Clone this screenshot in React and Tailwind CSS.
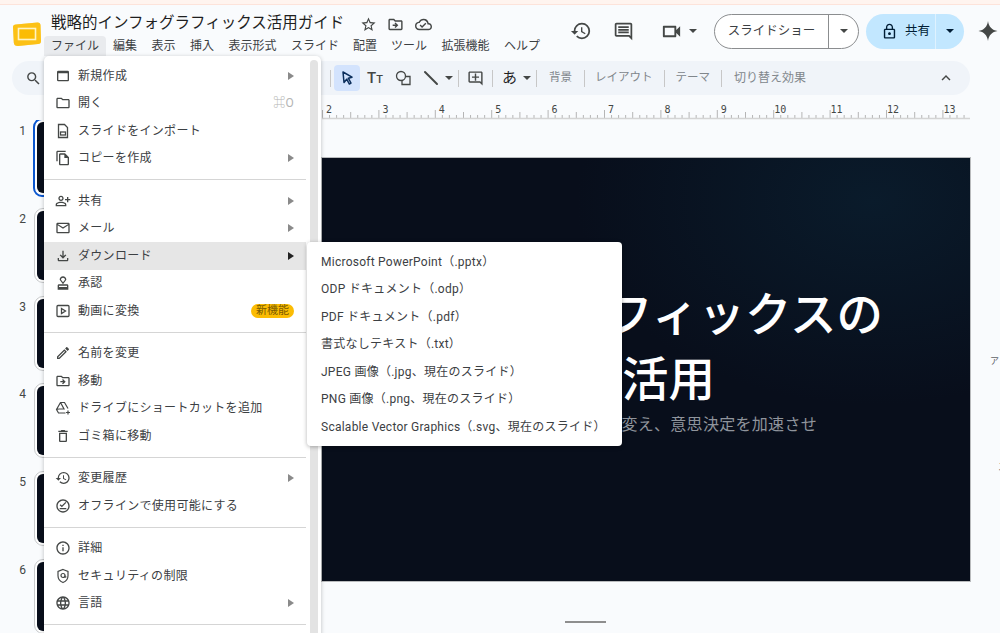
import React from 'react'
import {
  MdWebAsset, MdOutlineFolder, MdOutlineFileCopy, MdOutlinePersonAddAlt, MdOutlineEmail,
  MdOutlineFileDownload, MdOutlineApproval, MdOutlineEdit, MdOutlineDriveFileMove,
  MdOutlineDelete, MdHistory, MdOutlineOfflinePin, MdInfoOutline, MdLanguage, MdOutlineStarBorder,
  MdOutlineCloudDone, MdOutlineComment, MdOutlineVideocam, MdLockOutline, MdSearch, MdOutlineAddComment,
  MdKeyboardArrowUp,
} from 'react-icons/md'

function ImportIcon({ size, className }) {
  return (
    <svg width={size} height={size} viewBox="0 0 16 16" fill="none" stroke="currentColor" strokeWidth="1.300" className={className}>
      <path d="M3.500 1.500h6l3 3v10h-9z" /><rect x="5.500" y="9" width="5" height="3" />
    </svg>
  )
}

function PlayBoxIcon({ size, className }) {
  return (
    <svg width={size} height={size} viewBox="0 0 16 16" fill="none" stroke="currentColor" strokeWidth="1.300" className={className}>
      <rect x="2" y="2.500" width="12" height="11" rx="1" /><path d="M6.500 5.500l4 2.500-4 2.500z" />
    </svg>
  )
}

function DriveAddIcon({ size, className }) {
  return (
    <svg width={size} height={size} viewBox="0 0 16 16" fill="none" stroke="currentColor" strokeWidth="1.200" className={className}>
      <path d="M5.500 2.500h4l3.500 6M5.500 2.500L1.500 9.500l2 3.500h7M5.500 2.500l3.500 6.500H4l-2.500.5" /><path d="M13 10.500v4M11 12.500h4" />
    </svg>
  )
}

function ShieldIcon({ size, className }) {
  return (
    <svg width={size} height={size} viewBox="0 0 16 16" fill="none" stroke="currentColor" strokeWidth="1.200" className={className}>
      <path d="M8 1.500l5 2v4.200c0 3.100-2.100 5.600-5 6.800-2.900-1.200-5-3.700-5-6.800V3.500z" /><circle cx="8" cy="7.500" r="2" /><path d="M10 7.500v1c0 1 1 1 1 0" />
    </svg>
  )
}

const menuGroups = [
  [
    { icon: MdWebAsset, label: '新規作成', arrow: true },
    { icon: MdOutlineFolder, label: '開く', hint: '⌘O' },
    { icon: ImportIcon, label: 'スライドをインポート' },
    { icon: MdOutlineFileCopy, label: 'コピーを作成', arrow: true },
  ],
  [
    { icon: MdOutlinePersonAddAlt, label: '共有', arrow: true },
    { icon: MdOutlineEmail, label: 'メール', arrow: true },
    { icon: MdOutlineFileDownload, label: 'ダウンロード', arrow: true, active: true },
    { icon: MdOutlineApproval, label: '承認' },
    { icon: PlayBoxIcon, label: '動画に変換', badge: '新機能' },
  ],
  [
    { icon: MdOutlineEdit, label: '名前を変更' },
    { icon: MdOutlineDriveFileMove, label: '移動' },
    { icon: DriveAddIcon, label: 'ドライブにショートカットを追加' },
    { icon: MdOutlineDelete, label: 'ゴミ箱に移動' },
  ],
  [
    { icon: MdHistory, label: '変更履歴', arrow: true },
    { icon: MdOutlineOfflinePin, label: 'オフラインで使用可能にする' },
  ],
  [
    { icon: MdInfoOutline, label: '詳細' },
    { icon: ShieldIcon, label: 'セキュリティの制限' },
    { icon: MdLanguage, label: '言語', arrow: true },
  ],
  [],
]

const downloads = [
  'Microsoft PowerPoint（.pptx）',
  'ODP ドキュメント（.odp）',
  'PDF ドキュメント（.pdf）',
  '書式なしテキスト（.txt）',
  'JPEG 画像（.jpg、現在のスライド）',
  'PNG 画像（.png、現在のスライド）',
  'Scalable Vector Graphics（.svg、現在のスライド）',
]

const menuBar = [
  ['ファイル', 'bg-[#e9ebee] rounded-t-[4px] w-[62px]'],
  ['編集', 'w-[38px]'],
  ['表示', 'w-[39px]'],
  ['挿入', 'w-[38px]'],
  ['表示形式', 'w-[63px]'],
  ['スライド', 'w-[62px]'],
  ['配置', 'w-[38px]'],
  ['ツール', 'w-[50px]'],
  ['拡張機能', 'w-[63px]'],
  ['ヘルプ', 'w-[50px]'],
]

function Caret({ className = 'fill-[#444746]' }) {
  return <svg width="8" height="4" viewBox="0 0 8 4" className={className}><path d="M0 0h8L4 4z" /></svg>
}

function Divider() {
  return <div className="w-px h-[17px] bg-[#c7c7c7]" />
}

function Ruler() {
  const ticks = []
  for (let i = 0; i < 92; i++) {
    const x = 7.05 * i + 0.5
    const long = i % 8 === 0 ? 8 : i % 4 === 0 ? 6 : 3
    ticks.push(<line key={i} x1={x} x2={x} y1={18 - long} y2={18} stroke="#b5b5b5" strokeWidth="1" />)
  }
  const nums = [2, 3, 4, 5, 6, 7, 8, 9, 10, 11, 12, 13]
  return (
    <svg width="648" height="21" viewBox="0 0 648 21">
      {ticks}
      <line x1="0" x2="648" y1="18.5" y2="18.5" stroke="#d4d4d4" strokeWidth="1.5" />
      {nums.map((n, i) => (
        <text key={n} x={7 + 56.4 * i} y="13" textAnchor="middle" fontSize="10" fill="#444746" fontFamily="'DejaVu Sans Mono', monospace">{n}</text>
      ))}
    </svg>
  )
}

function Thumb({ n, selected }) {
  return (
    <div className="flex h-[75px] mb-[12.8px] items-start">
      <div className="w-[33px] pt-[2px] pr-[7px] text-right text-[12px] text-[#444746]">{n}</div>
      <div className={selected
        ? 'w-[200px] h-[79px] -mt-[2px] p-[2px] rounded-[9px] border-2 border-[#0b57d0] bg-white'
        : 'w-[200px] h-[75px] ml-[1px] p-[2px] rounded-[9px] border border-[#c8cacc] bg-white'}>
        <div className="w-full h-full rounded-[6px] bg-[#080e1b]" />
      </div>
    </div>
  )
}

function FileMenu() {
  return (
    <div className="absolute left-[44px] top-[56px] w-[277px] h-[590px] bg-white rounded-[5px] shadow-[0_1px_4px_rgba(0,0,0,0.25)] pt-[6px] flex">
      <div className="w-[262px] shrink-0">
        {menuGroups.map((group, gi) => (
          <div key={gi}>
            {gi > 0 && <div className="h-px bg-[#d5d5d5] my-[7px]" />}
            {group.map(item => {
              const Icon = item.icon
              return (
                <div key={item.label} className={`h-[27.5px] flex items-center pl-[11px] pr-[12px] text-[12px] tracking-[0.3px] text-[#3c4043] ${item.active ? 'bg-[#e6e6e6]' : ''}`}>
                  <Icon size={16} className="text-[#444746] shrink-0" />
                  <span className="ml-[7px] flex-1 whitespace-nowrap">{item.label}</span>
                  {item.arrow && <svg width="6" height="8" viewBox="0 0 6 8" className={item.active ? 'fill-[#222]' : 'fill-[#8a8a8a]'}><path d="M0 0l6 4-6 4z" /></svg>}
                  {item.hint && <span className="text-[#b4b4b4]">{item.hint}</span>}
                  {item.badge && <span className="bg-[#fbbc04] text-[#7a5b00] rounded-full text-[11px] tracking-normal leading-[14px] px-[5px]">{item.badge}</span>}
                </div>
              )
            })}
          </div>
        ))}
      </div>
      <div className="w-[8px] ml-[4px] -mt-[2px] h-[578px] bg-[#e3e3e3] rounded-full" />
    </div>
  )
}

function DownloadMenu() {
  return (
    <div className="absolute left-[307px] top-[242px] w-[315px] h-[204px] bg-white rounded-[4px] shadow-[0_1px_4px_rgba(0,0,0,0.3)] pt-[6px] pl-[14px]">
      {downloads.map(d => (
        <div key={d} className="h-[27.5px] flex items-center text-[12px] tracking-[0.25px] text-[#3c4043] whitespace-nowrap">{d}</div>
      ))}
    </div>
  )
}

export default function App() {
  return (
    <div className="relative w-[1000px] h-[633px] overflow-hidden bg-[#f9fbfd] font-['Roboto','Noto_Sans_CJK_JP',sans-serif]">
      <div className="h-[5px] bg-[#fff4ef] border-b border-[#fde3da]" />

      <div className="h-[51px] flex">
        <div className="w-[44px] pl-[13px] pt-[16px] shrink-0">
          <svg width="28" height="26" viewBox="0 0 28 26">
            <path d="M3 3.5 24.5 1.5Q27.5 1.5 27.5 4.5L28 20Q28 23 25 23L5 25Q1 25 .8 21.5L0 6Q0 3.5 3 3.5z" fill="#fcc934" />
            <path d="M3 3.5 24.5 1.5Q27.5 1.5 27.5 4.5L28 20Q28 23 25 23L5 25Q1 25 .8 21.5L0 6Q0 3.5 3 3.5z" fill="#fbbc04" opacity=".6" />
            <rect x="5.5" y="7.5" width="17" height="11" fill="#fbbc04" stroke="#fff3c4" strokeWidth="1.6" />
          </svg>
        </div>
        <div className="w-[517px] shrink-0">
          <div className="flex items-center h-[30px] pt-[8px] pl-[7px] text-[#1f1f1f]">
            <span className="text-[15.5px] whitespace-nowrap">戦略的インフォグラフィックス活用ガイド</span>
            <MdOutlineStarBorder size={17} className="ml-[16px] text-[#444746]" />
            <MdOutlineDriveFileMove size={17} className="ml-[10px] text-[#444746]" />
            <MdOutlineCloudDone size={17} className="ml-[11px] text-[#444746]" />
          </div>
          <div className="flex items-center h-[21px] pt-[1px] text-[12px] text-[#3c4043]">
            {menuBar.map(([label, cls]) => (
              <div key={label} className={`h-full flex items-center justify-center shrink-0 ${cls}`}>{label}</div>
            ))}
          </div>
        </div>
        <div className="flex items-center h-[40px] mt-[6px] text-[#444746]">
          <MdHistory size={22} className="ml-[9px]" />
          <MdOutlineComment size={21} className="ml-[21px]" />
          <MdOutlineVideocam size={23} className="ml-[26px]" />
          <span className="ml-[6px]"><Caret /></span>
          <div className="ml-[17px] w-[145px] h-[35px] flex items-stretch rounded-full border border-[#8b8d8f] bg-white">
            <div className="w-[113px] flex items-center justify-center text-[12.5px] text-[#3c4043]">スライドショー</div>
            <div className="flex-1 border-l border-[#8b8d8f] flex items-center justify-center"><Caret /></div>
          </div>
          <div className="ml-[7px] w-[98px] h-[35px] flex items-stretch rounded-full bg-[#c2e7ff]">
            <div className="w-[69px] pl-[15px] flex items-center text-[12.5px] text-[#001d35]">
              <MdLockOutline size={17} className="text-[#001d35]" />
              <span className="ml-[7px]">共有</span>
            </div>
            <div className="flex-1 border-l border-[#dff2ff] flex items-center justify-center"><Caret className="fill-[#001d35]" /></div>
          </div>
          <svg width="20" height="20" viewBox="0 0 20 20" className="ml-[14px]"><path d="M10 0c.6 5.5 4.2 9.300 9.500 10-5.300.7-8.900 4.500-9.500 10-.6-5.500-4.200-9.300-9.500-10C5.800 9.300 9.400 5.500 10 0z" fill="#444746" /></svg>
        </div>
      </div>

      <div className="mt-[5px] ml-[12px] w-[958px] h-[34px] rounded-full bg-[#f0f4f9] flex items-center text-[#444746]">
        <MdSearch size={17} className="ml-[13px]" />
        <div className="ml-[288px]"><Divider /></div>
        <div className="ml-[3px] w-[26px] h-[26px] rounded-[4px] bg-[#d3e3fd] flex items-center justify-center">
          <svg width="13" height="14" viewBox="0 0 13 14"><path d="M2 1l9 5.200-3.700 1L10 12l-1.700 1-2.600-4.800L3 11.500z" fill="none" stroke="#0b2e5c" strokeWidth="1.500" strokeLinejoin="round" /></svg>
        </div>
        <span className="ml-[7px] w-[16px] text-[15px] font-medium leading-none whitespace-nowrap text-[#444746]">T<span className="text-[11px]">T</span></span>
        <svg width="16" height="16" viewBox="0 0 16 16" className="ml-[12px]" fill="none" stroke="#444746" strokeWidth="1.300"><circle cx="6" cy="6" r="4.500" /><path d="M10 6.500h5v8H7v-4" /></svg>
        <svg width="16" height="16" viewBox="0 0 16 16" className="ml-[12px]"><path d="M2 2l12 12" stroke="#444746" strokeWidth="2" strokeLinecap="round" /></svg>
        <span className="ml-[6px]"><Caret /></span>
        <div className="ml-[5px]"><Divider /></div>
        <MdOutlineAddComment size={17} className="ml-[8px]" />
        <div className="ml-[8px]"><Divider /></div>
        <span className="ml-[9px] text-[15px] text-[#1f1f1f]">あ</span>
        <span className="ml-[6px]"><Caret /></span>
        <div className="ml-[5px]"><Divider /></div>
        <span className="ml-[12px] text-[11.5px] text-[#80868b]">背景</span>
        <div className="ml-[12px]"><Divider /></div>
        <span className="ml-[10px] text-[11.5px] text-[#80868b] whitespace-nowrap">レイアウト</span>
        <div className="ml-[11px]"><Divider /></div>
        <span className="ml-[11px] text-[11.5px] text-[#80868b] whitespace-nowrap">テーマ</span>
        <div className="ml-[11px]"><Divider /></div>
        <span className="ml-[12px] text-[12px] text-[#80868b] whitespace-nowrap">切り替え効果</span>
        <MdKeyboardArrowUp size={18} className="ml-[131px]" />
      </div>

      <div className="pl-[322px] mt-[5px] h-[21px]"><Ruler /></div>

      <div className="flex items-start">
        <div className="w-[321px] shrink-0 -mt-[1px] overflow-hidden">
          {[1, 2, 3, 4, 5, 6].map(n => <Thumb key={n} n={n} selected={n === 1} />)}
        </div>
        <div className="mt-[36px] w-[650px] h-[425px] shrink-0 border border-[#b9bbbd] bg-[#080e1b] bg-[radial-gradient(ellipse_at_85%_10%,#0a1b2b_0%,#080e1b_38%)] overflow-hidden flex flex-col items-end text-white whitespace-nowrap">
          <div className="mt-[125px] mr-[87px] h-[65px] text-[46.500px] leading-[65px] font-medium">インフォグラフィックスの</div>
          <div className="mr-[255px] h-[65px] text-[46.500px] leading-[65px] font-medium">活用</div>
          <div className="mr-[153px] text-[16px] leading-[24px] tracking-[0.3px] text-[#8f949c]">変え、意思決定を加速させ</div>
        </div>
        <div className="w-[29px] shrink-0 text-[9px] text-[#5f6368] leading-none whitespace-nowrap">
          <div className="pl-[19px] pt-[236px]">ア</div>
          <div className="pl-[27px] pt-[97px]">ス</div>
        </div>
      </div>

      <div className="absolute left-[565px] top-[621px] w-[41px] h-[2px] bg-[#8e8e8e]" />
      <FileMenu />
      <DownloadMenu />
    </div>
  )
}
